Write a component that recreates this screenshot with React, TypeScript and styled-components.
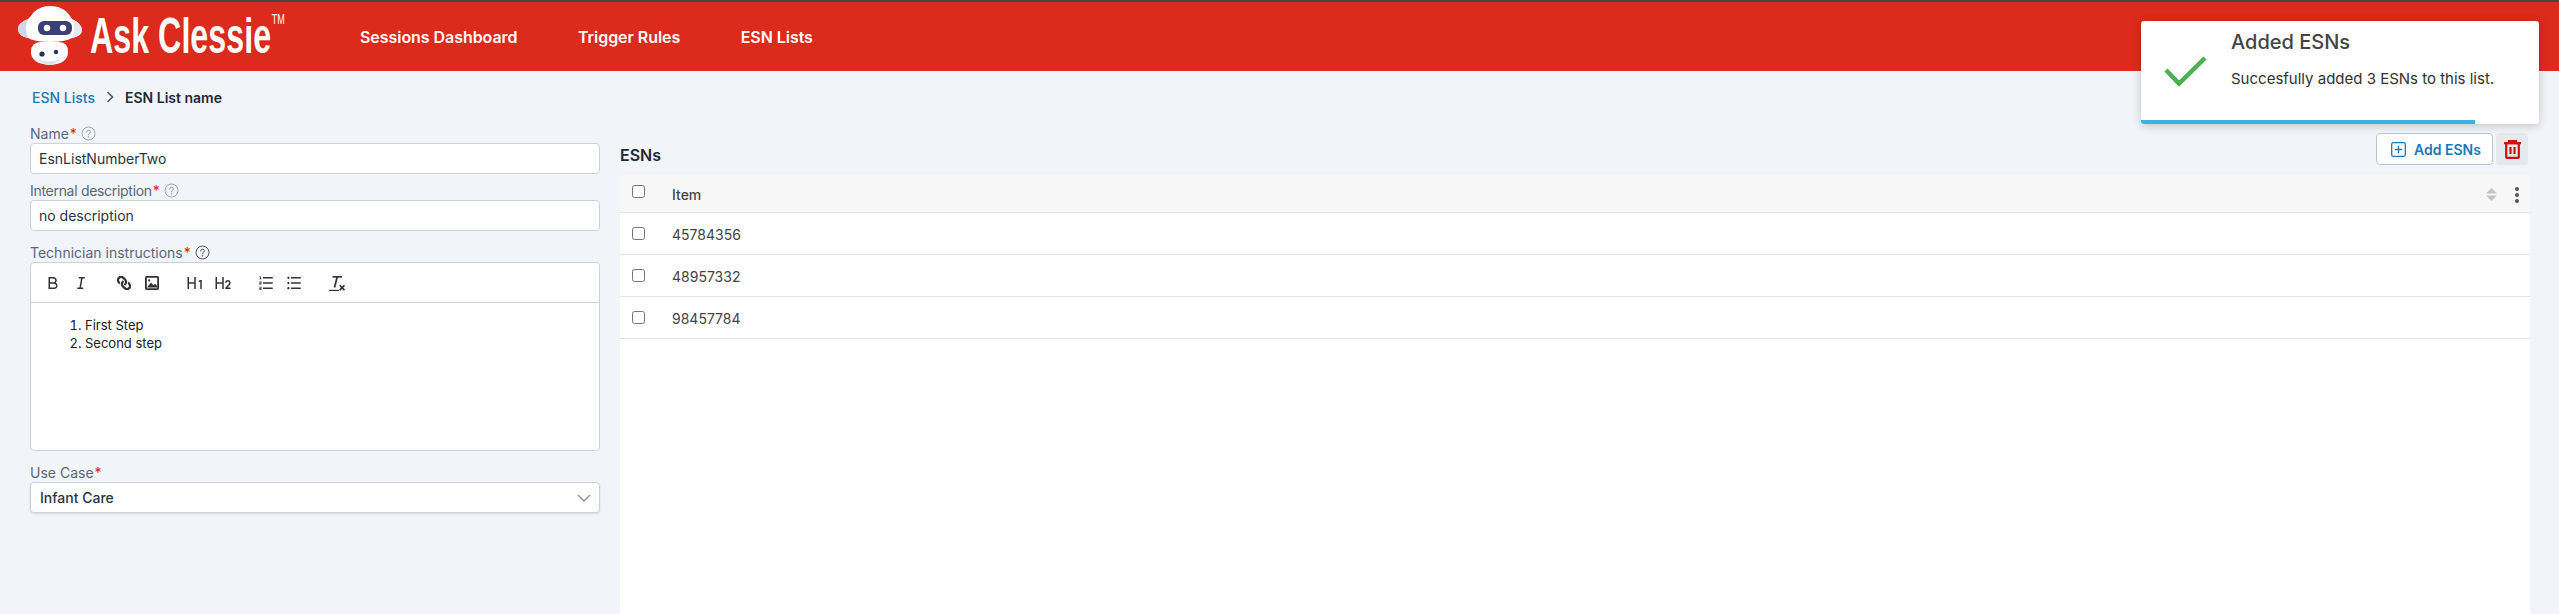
import React from 'react';
import styled, { createGlobalStyle } from 'styled-components';
import { RiBold, RiItalic, RiH1, RiH2, RiListOrdered, RiListUnordered } from 'react-icons/ri';
import { FaLink } from 'react-icons/fa';

const GlobalStyle = createGlobalStyle`
  html, body {
    margin: 0;
    padding: 0;
    background: #f1f5f9;
    font-family: Inter, "Liberation Sans", sans-serif;
    color: #1e293b;
  }
`;

const RobotLogo: React.FC = () => (
  <svg width="66" height="60" viewBox="0 0 66 60">
    <path d="M14 10 C18 3 26 0 33 0 C41 0 49 3 53 10 L55 13 Q65 18 65 24 Q65 30 55 32 Q48 36 33 36 Q18 36 11 32 Q1 30 1 23 Q1 17 11 13 Z" fill="#fff" />
    <path d="M11 13 Q1 17 1 23 Q1 30 11 32 Q7 22 11 13 Z" fill="#cfd8e6" />
    <path d="M55 13 Q65 18 65 24 Q65 30 55 32 Q59 22 55 13 Z" fill="#e4e9f2" />
    <rect x="21" y="15" width="34" height="14" rx="6" fill="#3b3f78" />
    <circle cx="30" cy="22" r="3.2" fill="#fff" />
    <circle cx="46" cy="22" r="3.2" fill="#fff" />
    <path d="M14 46 Q14 36 24 36 L42 36 Q51 36 51 46 Q51 58 33 59 Q14 58 14 46 Z" fill="#fff" />
    <path d="M20 52 Q30 58 44 53 Q38 59 33 59 Q24 59 20 52 Z" fill="#dfe4ee" />
    <circle cx="25" cy="48" r="2.6" fill="#2c2f5c" />
    <circle cx="39" cy="46" r="2.2" fill="#2c2f5c" />
  </svg>
);

const HelpIcon: React.FC<{ color: string }> = ({ color }) => (
  <svg width="15" height="15" viewBox="0 0 15 15" fill="none" stroke={color}>
    <circle cx="7.5" cy="7.5" r="6.5" />
    <path d="M5.6 6 Q5.7 4.2 7.5 4.2 Q9.4 4.2 9.4 5.8 Q9.4 6.9 8.2 7.4 Q7.5 7.8 7.5 8.8" strokeLinecap="round" />
    <circle cx="7.5" cy="10.8" r="0.4" />
  </svg>
);

const ImageIcon: React.FC = () => (
  <svg viewBox="0 0 18 18">
    <rect x="2.9" y="2.9" width="12.2" height="12.2" rx="0.8" fill="none" stroke="#333" strokeWidth="1.8" />
    <path d="M4 13.6 L8 8.6 L10.4 11.2 L12 9.8 L14 12 V13.6 Z" fill="#333" />
    <circle cx="6.2" cy="6.4" r="1.1" fill="#333" />
  </svg>
);

const ClearFormatIcon: React.FC = () => (
  <svg viewBox="0 0 16 16" fill="none" stroke="#333">
    <path d="M4 2.5 H12.5" strokeWidth="1.5" />
    <path d="M8.2 2.5 L5.8 12" strokeWidth="1.5" />
    <path d="M1 14.6 H10" strokeWidth="1.1" />
    <path d="M10.5 10 L14.6 14.4 M14.6 10 L10.5 14.4" strokeWidth="1.6" />
  </svg>
);

const Page = styled.div`
  width: 2559px;
  height: 614px;
  display: flex;
  flex-direction: column;
  overflow: hidden;
  position: relative;
`;

const Header = styled.header`
  height: 71px;
  flex-shrink: 0;
  box-sizing: border-box;
  display: flex;
  align-items: center;
  background: #dc2a1c;
  border-top: 2px solid #444;
  padding-left: 17px;
`;

const Brand = styled.div`
  width: 343px;
  display: flex;
  align-items: center;
  gap: 7px;
  flex-shrink: 0;
  margin-bottom: 2px;
`;

const BrandName = styled.div`
  width: 177px;
  font-family: "Liberation Sans", sans-serif;
  font-size: 50px;
  line-height: 50px;
  font-weight: 700;
  color: #fff;
  white-space: nowrap;
  transform: scaleX(0.645);
  transform-origin: left center;
`;

const Trademark = styled.span`
  display: inline-block;
  margin: 1px 0 0 1px;
  font-size: 14px;
  line-height: 15px;
  font-weight: 400;
  vertical-align: top;
`;

const Nav = styled.nav`
  display: flex;
  gap: 60.5px;
`;

const NavLink = styled.a`
  font-size: 16px;
  font-weight: 600;
  letter-spacing: -0.05px;
  color: #fff;
`;

const Crumbs = styled.div`
  height: 52px;
  flex-shrink: 0;
  display: flex;
  align-items: center;
  gap: 11px;
  padding-left: 32px;
  font-size: 14px;
  font-weight: 600;
`;

const CrumbLink = styled.a`
  color: #1a78b8;
  font-weight: 500;
`;

const Main = styled.main`
  flex: 1;
  display: grid;
  grid-template-columns: 570px 1fr;
  column-gap: 20px;
  padding: 0 29px 0 30px;
  min-height: 0;
`;

const FormColumn = styled.div`
  display: flex;
  flex-direction: column;
`;

const Field = styled.div<{ $gap: number }>`
  margin-bottom: ${(p) => p.$gap}px;
`;

const Label = styled.label<{ $tight?: boolean }>`
  height: 20px;
  display: flex;
  align-items: center;
  gap: 4px;
  font-size: 14px;
  letter-spacing: ${(p) => (p.$tight ? '-0.3px' : '0')};
  color: #5b6779;
`;

const Required = styled.span`
  color: #e3170a;
  margin-left: 1px;
`;

const TextInput = styled.input`
  display: block;
  width: 100%;
  height: 31px;
  box-sizing: border-box;
  padding: 0 8px;
  border: 1px solid #cbd2db;
  border-radius: 4px;
  background: #fff;
  font-family: Inter, sans-serif;
  font-size: 14px;
  color: #2a3444;
`;

const Editor = styled.div`
  height: 189px;
  box-sizing: border-box;
  background: #fff;
  border: 1px solid #cbd2db;
  border-radius: 4px;
`;

const Toolbar = styled.div`
  height: 40px;
  box-sizing: border-box;
  display: flex;
  align-items: center;
  padding-left: 13px;
  border-bottom: 1px solid #cfd5dc;
`;

const ToolGroup = styled.div`
  display: flex;
  gap: 10px;
  margin-right: 25px;
  color: #333;
  svg {
    display: block;
    width: 18px;
    height: 18px;
  }
`;

const LinkIcon = styled(FaLink)`
  transform: scale(-0.8, 0.8);
`;

const EditorBody = styled.ol`
  margin: 14px 0 0;
  padding-left: 54px;
  font-size: 13px;
  line-height: 17.5px;
  color: #222;
`;

const SelectBox = styled.div`
  height: 31px;
  box-sizing: border-box;
  display: flex;
  align-items: center;
  justify-content: space-between;
  padding: 0 8px 0 9px;
  background: #fff;
  border: 1px solid #cbd2db;
  border-radius: 4px;
  box-shadow: 0 1px 2px rgba(0, 0, 0, 0.12);
  font-size: 14px;
  font-weight: 500;
  color: #2a3444;
`;

const ListColumn = styled.section`
  display: flex;
  flex-direction: column;
  min-width: 0;
`;

const ListHead = styled.div`
  height: 52px;
  padding: 10px 2px 0 0;
  box-sizing: border-box;
  display: flex;
  justify-content: space-between;
  flex-shrink: 0;
`;

const ListTitle = styled.h2`
  align-self: flex-end;
  margin: 0 0 8px;
  font-size: 16px;
  line-height: 24px;
  font-weight: 600;
  color: #1e293b;
`;

const ListActions = styled.div`
  display: flex;
  gap: 3px;
  align-items: flex-start;
`;

const AddButton = styled.button`
  width: 117px;
  height: 32px;
  box-sizing: border-box;
  display: flex;
  align-items: center;
  justify-content: center;
  gap: 8px;
  padding: 0 0 0 3px;
  background: #fff;
  border: 1px solid #bcc6d2;
  border-radius: 4px;
  font-family: Inter, sans-serif;
  font-size: 14px;
  font-weight: 600;
  color: #1a78b8;
`;

const TrashButton = styled.button`
  width: 32px;
  height: 32px;
  padding: 0;
  display: flex;
  align-items: center;
  justify-content: center;
  background: #e5e9ee;
  border: none;
  border-radius: 3px;
`;

const Table = styled.div`
  flex: 1;
  background: #fff;
`;

const Row = styled.div<{ $head?: boolean }>`
  height: ${(p) => (p.$head ? 38 : 42)}px;
  box-sizing: border-box;
  display: flex;
  align-items: center;
  padding: 0 12px;
  background: ${(p) => (p.$head ? '#f7f7f7' : '#fff')};
  border-bottom: 1px solid #e2e4e7;
  font-size: 14px;
  font-weight: ${(p) => (p.$head ? 500 : 400)};
  color: #444;
`;

const Check = styled.input.attrs({ type: 'checkbox' })<{ $lift?: number }>`
  appearance: none;
  width: 13px;
  height: 13px;
  margin: 0 27px 0 0;
  margin-top: ${(p) => (p.$lift ? -p.$lift : 0)}px;
  background: #fff;
  border: 1px solid #767676;
  border-radius: 2.5px;
  flex-shrink: 0;
`;

const Cell = styled.span`
  flex: 1;
  padding-top: 2px;
`;

const HeadTools = styled.div`
  display: flex;
  align-items: center;
  gap: 18px;
  margin-right: -1px;
  padding-top: 2px;
`;

const Toast = styled.div`
  position: absolute;
  left: 2141px;
  top: 21px;
  width: 398px;
  height: 103px;
  display: flex;
  overflow: hidden;
  background: #fff;
  border-radius: 3px;
  box-shadow: 0 2px 10px rgba(0, 0, 0, 0.2);
`;

const ToastIcon = styled.div`
  width: 90px;
  padding: 34px 0 0 23px;
  box-sizing: border-box;
`;

const ToastText = styled.div`
  padding-top: 9px;
`;

const ToastTitle = styled.div`
  font-size: 20px;
  line-height: 24px;
  font-weight: 500;
  color: #444;
`;

const ToastMessage = styled.div`
  margin-top: 15px;
  font-size: 15px;
  line-height: 20px;
  color: #333;
`;

const ToastProgress = styled.div`
  position: absolute;
  left: 0;
  bottom: 0;
  height: 4px;
  background: #3fb0e4;
`;

const esns = ['45784356', '48957332', '98457784'];

export default function App() {
  return (
    <Page>
      <GlobalStyle />
      <Header>
        <Brand>
          <RobotLogo />
          <BrandName>
            Ask Clessie<Trademark>TM</Trademark>
          </BrandName>
        </Brand>
        <Nav>
          <NavLink>Sessions Dashboard</NavLink>
          <NavLink>Trigger Rules</NavLink>
          <NavLink>ESN Lists</NavLink>
        </Nav>
      </Header>
      <Crumbs>
        <CrumbLink>ESN Lists</CrumbLink>
        <svg width="8" height="12" viewBox="0 0 8 12" fill="none" stroke="#555" strokeWidth="1.6">
          <path d="M1.5 1 L6.5 6 L1.5 11" />
        </svg>
        <span>ESN List name</span>
      </Crumbs>
      <Main>
        <FormColumn>
          <Field $gap={6}>
            <Label>
              <span>Name<Required>*</Required></span>
              <HelpIcon color="#9aa5b1" />
            </Label>
            <TextInput readOnly value="EsnListNumberTwo" />
          </Field>
          <Field $gap={11}>
            <Label $tight>
              <span>Internal description<Required>*</Required></span>
              <HelpIcon color="#9aa5b1" />
            </Label>
            <TextInput readOnly value="no description" />
          </Field>
          <Field $gap={11}>
            <Label>
              <span>Technician instructions<Required>*</Required></span>
              <HelpIcon color="#555" />
            </Label>
            <Editor>
              <Toolbar>
                <ToolGroup>
                  <RiBold />
                  <RiItalic />
                </ToolGroup>
                <ToolGroup>
                  <LinkIcon />
                  <ImageIcon />
                </ToolGroup>
                <ToolGroup>
                  <RiH1 />
                  <RiH2 />
                </ToolGroup>
                <ToolGroup>
                  <RiListOrdered />
                  <RiListUnordered />
                </ToolGroup>
                <ToolGroup>
                  <ClearFormatIcon />
                </ToolGroup>
              </Toolbar>
              <EditorBody>
                <li>First Step</li>
                <li>Second step</li>
              </EditorBody>
            </Editor>
          </Field>
          <Field $gap={0}>
            <Label>
              <span>Use Case<Required>*</Required></span>
            </Label>
            <SelectBox>
              Infant Care
              <svg width="14" height="8" viewBox="0 0 14 8" fill="none" stroke="#999" strokeWidth="1.5">
                <path d="M1 1 L7 7 L13 1" />
              </svg>
            </SelectBox>
          </Field>
        </FormColumn>
        <ListColumn>
          <ListHead>
            <ListTitle>ESNs</ListTitle>
            <ListActions>
              <AddButton>
                <svg width="15" height="15" viewBox="0 0 15 15" fill="none" stroke="#1a78b8" strokeWidth="1.3">
                  <rect x="0.7" y="0.7" width="13.6" height="13.6" rx="1.5" />
                  <path d="M7.5 3.8 V11.2 M3.8 7.5 H11.2" />
                </svg>
                Add ESNs
              </AddButton>
              <TrashButton>
                <svg width="17" height="19" viewBox="0 0 17 19" fill="none" stroke="#c9140e" strokeWidth="2.2">
                  <path d="M0 3.2 H17 M5 3 V1.2 H12 V3" />
                  <rect x="2.2" y="3.2" width="12.6" height="14.7" rx="1.5" />
                  <path d="M6.5 7 V14 M10.5 7 V14" />
                </svg>
              </TrashButton>
            </ListActions>
          </ListHead>
          <Table>
            <Row $head>
              <Check $lift={4} />
              <Cell>Item</Cell>
              <HeadTools>
                <svg width="11" height="13" viewBox="0 0 11 13" fill="#c4c4c4">
                  <path d="M5.5 0 L11 5.5 H0 Z M0 7.5 H11 L5.5 13 Z" />
                </svg>
                <svg width="4" height="16" viewBox="0 0 4 16" fill="#555">
                  <circle cx="2" cy="2" r="2" />
                  <circle cx="2" cy="8" r="2" />
                  <circle cx="2" cy="14" r="2" />
                </svg>
              </HeadTools>
            </Row>
            {esns.map((esn) => (
              <Row key={esn}>
                <Check />
                <Cell>{esn}</Cell>
              </Row>
            ))}
          </Table>
        </ListColumn>
      </Main>
      <Toast>
        <ToastIcon>
          <svg width="44" height="32" viewBox="0 0 44 32" fill="none" stroke="#4caf50" strokeWidth="4.5">
            <path d="M2 15 L15 28.5 L41 3" />
          </svg>
        </ToastIcon>
        <ToastText>
          <ToastTitle>Added ESNs</ToastTitle>
          <ToastMessage>Succesfully added 3 ESNs to this list.</ToastMessage>
        </ToastText>
        <ToastProgress style={{ width: '84%' }} />
      </Toast>
    </Page>
  );
}
